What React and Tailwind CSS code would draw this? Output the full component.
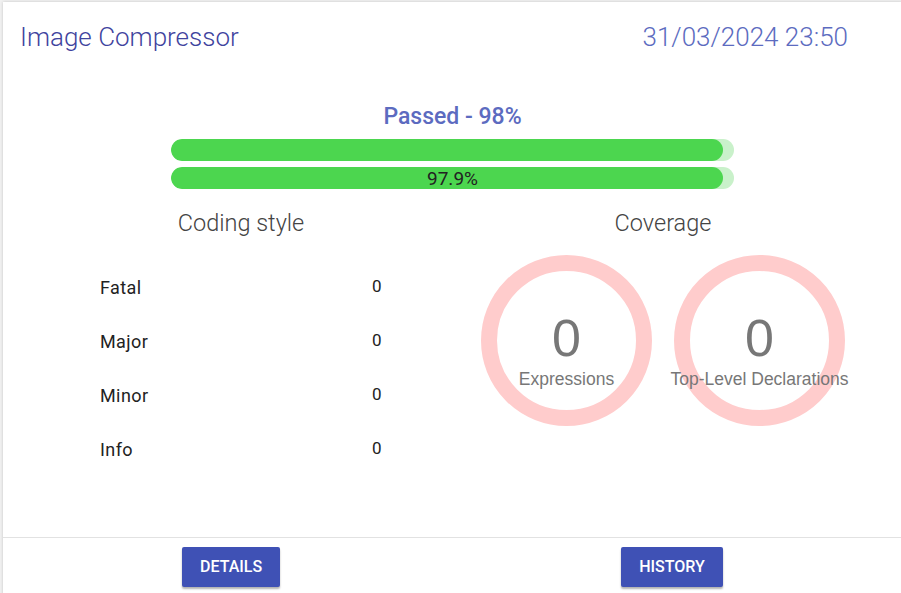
import React from "react";

const codingStyle = [
  { label: "Fatal", value: 0 },
  { label: "Major", value: 0 },
  { label: "Minor", value: 0 },
  { label: "Info", value: 0 },
];

const coverage = [
  { label: "Expressions", value: 0 },
  { label: "Top-Level Declarations", value: 0 },
];

const ProgressBar = ({ percent, label }) => (
  <div className="relative h-[22px] w-full rounded-full bg-[#c9f1ca] overflow-hidden">
    <div
      className="absolute inset-y-0 left-0 rounded-full bg-[#4cd64f]"
      style={{ width: `${percent}%` }}
    />
    {label && (
      <div className="relative flex h-full items-center justify-center text-[19px] leading-none text-[#222]">
        {label}
      </div>
    )}
  </div>
);

const CoverageRing = ({ value, label }) => (
  <div className="flex h-[171px] w-[171px] flex-col items-center rounded-full border-[16px] border-[#ffcccc] pt-[41px] font-['Liberation_Sans',Arial,sans-serif] text-[#777]">
    <div className="text-[52px] leading-none">{value}</div>
    <div className="mt-[5px] whitespace-nowrap text-[17.5px] leading-[20px]">{label}</div>
  </div>
);

export default function App() {
  return (
    <div className="h-[593px] overflow-hidden bg-[#f1f1f1] pl-[3px] pt-[2px] font-['Roboto',sans-serif]">
      <div className="w-[899px] h-[620px] bg-white shadow-[0_0_3px_rgba(0,0,0,0.18)]">
        <div className="flex h-[535px] flex-col">
          {/* Header */}
          <div className="flex items-center justify-between pl-[17px] pr-[54px] pt-[19px]">
            <h1 className="text-[26px] font-light leading-[32px] text-[#3f449e]">Image Compressor</h1>
            <span className="text-[26px] font-light leading-[32px] text-[#5c6bc0]">31/03/2024 23:50</span>
          </div>

          {/* Result */}
          <div className="mt-[51px] text-center text-[23px] font-medium leading-[26px] text-[#5c6bc0]">
            Passed - 98%
          </div>
          <div className="mx-auto mt-[9px] flex w-[563px] flex-col gap-[6px]">
            <ProgressBar percent={98} />
            <ProgressBar percent={98} label="97.9%" />
          </div>

          {/* Columns */}
          <div className="mt-[20px] flex">
            <div className="w-[476px]">
              <h2 className="text-center text-[23.5px] font-light leading-[28px] text-[#444]">Coding style</h2>
              <div className="mt-[23px] flex flex-col">
                {codingStyle.map((row) => (
                  <div key={row.label} className="flex h-[54px] items-center pl-[97px] text-[#222]">
                    <span className="w-[272px] text-[18px] tracking-[0.4px]">{row.label}</span>
                    <span className="text-[17px]">{row.value}</span>
                  </div>
                ))}
              </div>
            </div>
            <div className="w-[368px]">
              <h2 className="text-center text-[23.5px] font-light leading-[28px] text-[#444]">Coverage</h2>
              <div className="mt-[18px] flex justify-center gap-[22px]">
                {coverage.map((c) => (
                  <CoverageRing key={c.label} value={c.value} label={c.label} />
                ))}
              </div>
            </div>
          </div>
        </div>

        {/* Actions */}
        <div className="flex border-t border-[#e2e2e2] pt-[9px]">
          <button className="ml-[179px] h-[40px] rounded-[2px] bg-[#3f51b5] px-[18px] text-[16px] font-medium uppercase text-white shadow-[0_2px_2px_rgba(0,0,0,0.3)]">
            Details
          </button>
          <button className="ml-[341px] h-[40px] rounded-[2px] bg-[#3f51b5] px-[18px] text-[16px] font-medium uppercase text-white shadow-[0_2px_2px_rgba(0,0,0,0.3)]">
            History
          </button>
        </div>
      </div>
    </div>
  );
}
